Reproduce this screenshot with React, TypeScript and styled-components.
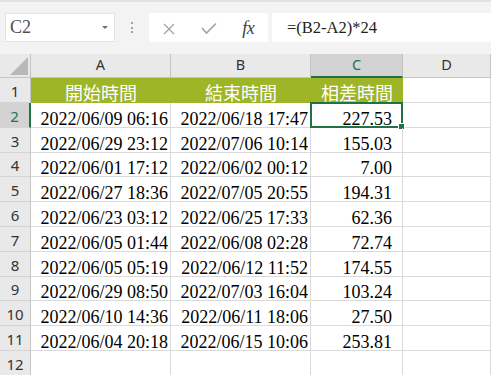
import { Fragment } from "react";
import styled, { createGlobalStyle } from "styled-components";

const GlobalStyle = createGlobalStyle`
  html, body {
    margin: 0;
    padding: 0;
    background: #fff;
    overflow: hidden;
  }
`;

const Page = styled.div`
  width: 491px;
  height: 375px;
  overflow: hidden;
  background: #fff;
`;

const FormulaBar = styled.div`
  height: 54px;
  box-sizing: border-box;
  background: #f3f3f3;
  border-top: 2px solid #e2e2e2;
  display: flex;
  align-items: flex-start;
  padding: 11px 0 0 5px;
`;

const NameBox = styled.div`
  width: 110px;
  height: 29px;
  box-sizing: border-box;
  background: #fff;
  border: 1px solid #e4e4e4;
  display: flex;
  align-items: center;
  justify-content: space-between;
  padding: 0 6px 0 4px;
  font-family: "Liberation Serif", serif;
  font-size: 18px;
  color: #505050;
`;

const DropArrow = styled.span`
  width: 0;
  height: 0;
  border-left: 3px solid transparent;
  border-right: 3px solid transparent;
  border-top: 3px solid #707070;
`;

const Grip = styled.div`
  width: 34px;
  height: 29px;
  display: flex;
  flex-direction: column;
  align-items: center;
  justify-content: center;
  gap: 2.5px;

  span {
    width: 2px;
    height: 2px;
    background: #a3a3a3;
  }
`;

const ButtonBox = styled.div`
  width: 119px;
  height: 29px;
  background: #fff;
  display: flex;
`;

const BarButton = styled.div`
  flex: 1;
  display: flex;
  align-items: center;
  justify-content: center;
  padding-top: 2px;
`;

const Fx = styled.span`
  font-family: "Liberation Serif", serif;
  font-style: italic;
  font-size: 18px;
  color: #404040;
  letter-spacing: -0.5px;
`;

const FormulaInput = styled.div`
  flex: 1;
  height: 29px;
  margin-left: 4px;
  background: #fff;
  display: flex;
  align-items: center;
  padding-left: 15px;
  font-family: "Liberation Serif", serif;
  font-size: 16.5px;
  color: #222;
`;

const Sheet = styled.div`
  display: grid;
  grid-template-columns: 31px 140px 140px 92px 88px;
  grid-template-rows: 24px 25px repeat(11, 24.8px);
`;

const Corner = styled.div`
  background: #e9e9e9;
  border-right: 1px solid #c4c4c4;
  border-bottom: 1px solid #c4c4c4;
  display: flex;
  align-items: flex-end;
  justify-content: flex-end;
  padding: 0 2px 2px 0;

  &::after {
    content: "";
    width: 0;
    height: 0;
    border-left: 18px solid transparent;
    border-bottom: 18px solid #b8b8b8;
  }
`;

const ColHeader = styled.div<{ $active?: boolean }>`
  box-sizing: border-box;
  background: ${(p) => (p.$active ? "#d3d3d3" : "#e9e9e9")};
  color: ${(p) => (p.$active ? "#217346" : "#333")};
  border-right: 1px solid #c4c4c4;
  border-bottom: ${(p) => (p.$active ? "2px solid #217346" : "1px solid #c4c4c4")};
  display: flex;
  align-items: center;
  justify-content: center;
  padding-bottom: 3px;
  font-family: "Noto Sans", "Open Sans", sans-serif;
  font-size: 14.5px;
`;

const RowHeader = styled.div<{ $active?: boolean }>`
  box-sizing: border-box;
  background: ${(p) => (p.$active ? "#d3d3d3" : "#e9e9e9")};
  color: ${(p) => (p.$active ? "#217346" : "#333")};
  border-right: ${(p) => (p.$active ? "2px solid #217346" : "1px solid #c4c4c4")};
  border-bottom: 1px solid #d4d4d4;
  display: flex;
  align-items: flex-end;
  justify-content: center;
  padding-bottom: 3px;
  line-height: 16px;
  font-family: "Noto Sans", "Open Sans", sans-serif;
  font-size: 15px;
`;

const TitleCell = styled.div`
  background: #9fb528;
  color: #fff;
  display: flex;
  align-items: center;
  justify-content: center;
  padding-top: 2px;
  font-family: "Noto Sans CJK TC", "Noto Sans CJK SC", sans-serif;
  font-size: 18px;
  line-height: 1;
`;

const BlankCell = styled.div`
  border-right: 1px solid #dadada;
  border-bottom: 1px solid #dadada;
`;

const Cell = styled.div<{ $pad?: number }>`
  position: relative;
  box-sizing: border-box;
  border-right: 1px solid #dadada;
  border-bottom: 1px solid #dadada;
  display: flex;
  align-items: flex-end;
  justify-content: flex-end;
  padding-right: ${(p) => p.$pad ?? 2}px;
  font-family: "Liberation Serif", serif;
  font-size: 18px;
  line-height: 16px;
  color: #000;
  white-space: nowrap;
`;

const SelectionFrame = styled.div`
  position: absolute;
  left: -1px;
  top: -1px;
  right: -1px;
  bottom: -1px;
  border: 2px solid #217346;
  pointer-events: none;

  &::after {
    content: "";
    position: absolute;
    right: -4px;
    bottom: -4px;
    width: 5px;
    height: 5px;
    background: #217346;
    border: 1px solid #fff;
  }
`;

const rows = [
  ["2022/06/09 06:16", "2022/06/18 17:47", "227.53"],
  ["2022/06/29 23:12", "2022/07/06 10:14", "155.03"],
  ["2022/06/01 17:12", "2022/06/02 00:12", "7.00"],
  ["2022/06/27 18:36", "2022/07/05 20:55", "194.31"],
  ["2022/06/23 03:12", "2022/06/25 17:33", "62.36"],
  ["2022/06/05 01:44", "2022/06/08 02:28", "72.74"],
  ["2022/06/05 05:19", "2022/06/12 11:52", "174.55"],
  ["2022/06/29 08:50", "2022/07/03 16:04", "103.24"],
  ["2022/06/10 14:36", "2022/06/11 18:06", "27.50"],
  ["2022/06/04 20:18", "2022/06/15 10:06", "253.81"],
];

function CrossIcon() {
  return (
    <svg width="12" height="12" viewBox="0 0 12 12">
      <path d="M1 1 L11 11 M11 1 L1 11" stroke="#a3a3a3" strokeWidth="1.3" fill="none" />
    </svg>
  );
}

function CheckIcon() {
  return (
    <svg width="16" height="13" viewBox="0 0 16 13">
      <path d="M1 6 L5.5 11 L15 1.5" stroke="#a3a3a3" strokeWidth="1.6" fill="none" />
    </svg>
  );
}

function App() {
  return (
    <Page>
      <GlobalStyle />
      <FormulaBar>
        <NameBox>
          <span>C2</span>
          <DropArrow />
        </NameBox>
        <Grip>
          <span />
          <span />
          <span />
        </Grip>
        <ButtonBox>
          <BarButton>
            <CrossIcon />
          </BarButton>
          <BarButton>
            <CheckIcon />
          </BarButton>
          <BarButton>
            <Fx>fx</Fx>
          </BarButton>
        </ButtonBox>
        <FormulaInput>=(B2-A2)*24</FormulaInput>
      </FormulaBar>

      <Sheet>
        <Corner />
        <ColHeader>A</ColHeader>
        <ColHeader>B</ColHeader>
        <ColHeader $active>C</ColHeader>
        <ColHeader>D</ColHeader>

        <RowHeader>1</RowHeader>
        <TitleCell>開始時間</TitleCell>
        <TitleCell>結束時間</TitleCell>
        <TitleCell>相差時間</TitleCell>
        <BlankCell />

        {rows.map((r, i) => (
          <Fragment key={i}>
            <RowHeader $active={i === 0}>{i + 2}</RowHeader>
            <Cell>{r[0]}</Cell>
            <Cell>{r[1]}</Cell>
            <Cell $pad={10}>
              {r[2]}
              {i === 0 && <SelectionFrame />}
            </Cell>
            <BlankCell />
          </Fragment>
        ))}

        <RowHeader>12</RowHeader>
        <BlankCell />
        <BlankCell />
        <BlankCell />
        <BlankCell />
      </Sheet>
    </Page>
  );
}

export default App;
